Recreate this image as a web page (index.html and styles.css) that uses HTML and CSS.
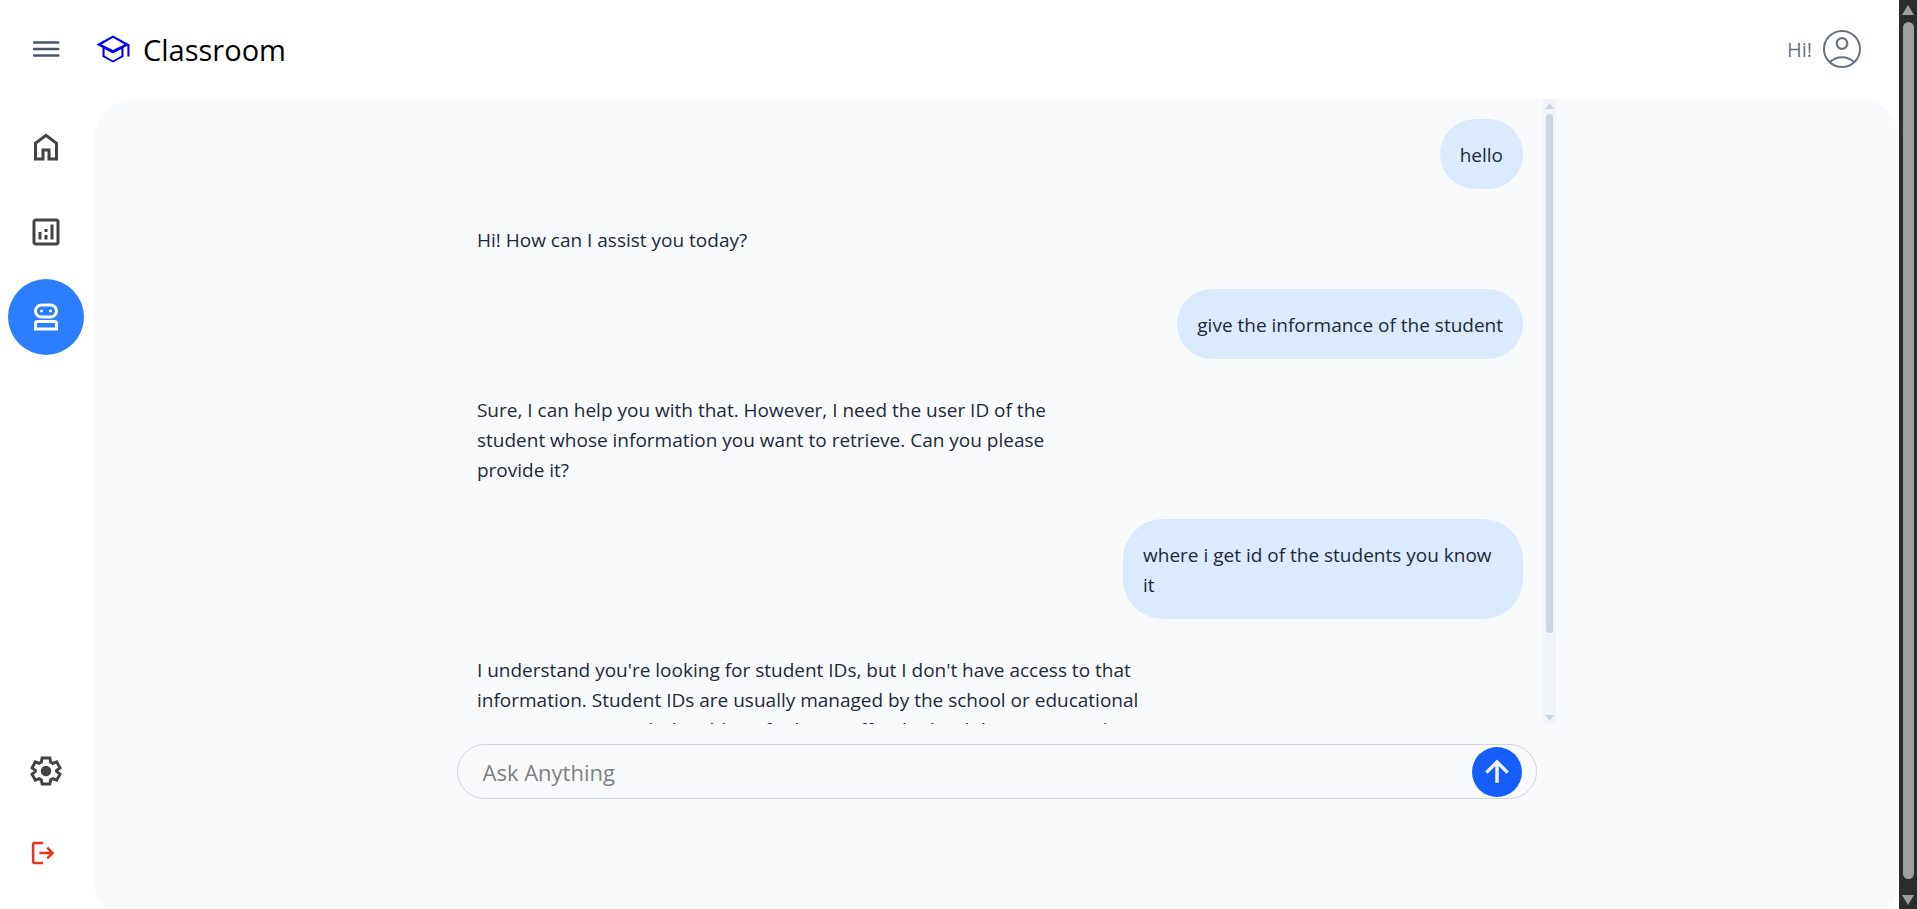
FILE: index.html
```html
<!DOCTYPE html>
<html lang="en">
<head>
<meta charset="utf-8">
<title>Classroom</title>
<link rel="stylesheet" href="styles.css">
</head>
<body>
<div class="page">
  <div class="app">
    <header class="header">
      <button class="menu" aria-label="Menu"><svg width="28" height="18" viewBox="0 0 28 18" fill="none" stroke="#4a5568" stroke-width="2.6" stroke-linecap="round"><path d="M2.200 2.500h24M2.200 9h24M2.200 15.500h24"/></svg></button>
      <a class="brand" href="#"><svg width="36" height="36" viewBox="0 0 24 24" fill="#0000f5"><path d="M12 21l-7-3.800v-6L1 9l11-6 11 6v8h-1.400v-7.200l-2.600 1.400v6L12 21zm0-8.300L19.600 9 12 4.500 4.400 9 12 12.700zm0 6.900l5.600-3.100V12L12 15l-5.600-3v4.500l5.600 3.100z"/></svg><span>Classroom</span></a>
      <button class="user"><span>Hi!</span><svg width="40" height="40" viewBox="0 0 40 40" fill="none" stroke="#6a7282" stroke-width="2"><circle cx="20" cy="20" r="18"/><circle cx="20" cy="14.500" r="5.300" stroke-width="2.200"/><path d="M8 33c6.500-6.500 17.500-6.500 24 0"/></svg></button>
    </header>
    <div class="body">
      <nav class="sidebar">
        <a class="item" href="#" aria-label="Home"><svg width="36" height="36" viewBox="0 0 24 24" fill="#434343"><path d="M6 19h3v-6h6v6h3v-9l-6-4.500L6 10v9zm-2 2V9l8-6 8 6v12h-7v-6h-2v6H4z"/></svg></a>
        <a class="item" href="#" aria-label="Analytics"><svg width="36" height="36" viewBox="0 0 24 24" fill="#434343"><path d="M7 17h2v-5H7v5zm8 0h2V7h-2v10zm-4 0h2v-3h-2v3zm0-5h2v-2h-2v2zM5 21q-.825 0-1.412-.588T3 19V5q0-.825.588-1.412T5 3h14q.825 0 1.413.588T21 5v14q0 .825-.587 1.413T19 21H5zm0-2h14V5H5v14z"/></svg></a>
        <a class="item active" href="#" aria-label="Assistant"><svg width="36" height="36" viewBox="0 0 24 24" fill="#fff"><path d="M4 21v-5q0-.825.588-1.412T6 14h12q.825 0 1.413.588T20 16v5H4zm5-8q-2.075 0-3.537-1.463T4 8q0-2.075 1.463-3.537T9 3h6q2.075 0 3.538 1.463T20 8q0 2.075-1.462 3.537T15 13H9zm-3 6h12v-3H6v3zm3-8h6q1.250 0 2.125-.875T18 8q0-1.250-.875-2.125T15 5H9q-1.250 0-2.125.875T6 8q0 1.250.875 2.125T9 11zm0-2q.425 0 .713-.288T10 8q0-.425-.287-.712T9 7q-.425 0-.712.288T8 8q0 .425.288.712T9 9zm6 0q.425 0 .713-.288T16 8q0-.425-.287-.712T15 7q-.425 0-.712.288T14 8q0 .425.288.712T15 9z"/></svg></a>
        <div class="bottom">
          <a class="item" href="#" aria-label="Settings"><svg width="36" height="36" viewBox="-12 -12 24 24"><path d="M-2.600-8.700h5.200l.5 2.800 1.400.8 2.600-1 2.200 4-2.200 1.700v.8l2.200 1.700-2.200 4-2.600-1-1.400.8-.5 2.800h-5.200l-.5-2.800-1.400-.8-2.600 1-2.200-4 2.200-1.700v-.8l-2.200-1.700 2.200-4 2.600 1 1.400-.8z" fill="none" stroke="#434343" stroke-width="2"/><circle r="3.500" fill="#434343"/></svg></a>
          <a class="item" href="#" aria-label="Log out"><svg width="32" height="30" viewBox="1.500 0 25.600 24" fill="#ea3323"><path d="M5 21q-.825 0-1.412-.587T3 19V5q0-.825.588-1.412T5 3h7v2H5v14h7v2H5zm11-4-1.375-1.450 2.550-2.550H9v-2h8.175l-2.550-2.550L16 7l5 5-5 5z"/></svg></a>
        </div>
      </nav>
      <main class="main">
        <section class="chat">
          <div class="messages">
            <p class="msg mine">hello</p>
            <p class="msg">Hi! How can I assist you today?</p>
            <p class="msg mine">give the informance of the student</p>
            <p class="msg">Sure, I can help you with that. However, I need the user ID of the<br>student whose information you want to retrieve. Can you please<br>provide it?</p>
            <p class="msg mine wide">where i get id of the students you know<br>it</p>
            <p class="msg">I understand you're looking for student IDs, but I don't have access to that<br>information. Student IDs are usually managed by the school or educational<br>institution. You might be able to find it on official school documents or by</p>
          </div>
          <div class="rail"><i class="up"></i><i class="thumb"></i><i class="down"></i></div>
        </section>
        <form class="ask">
          <input type="text" placeholder="Ask Anything" aria-label="Ask Anything">
          <button type="button" class="send" aria-label="Send"><svg width="30" height="30" viewBox="0 0 24 24" fill="none" stroke="#f3f3f3" stroke-width="2.800"><path d="M12 20.500V4.500M3.500 12.500L12 4l8.500 8.500"/></svg></button>
        </form>
      </main>
    </div>
  </div>
  <div class="rail page-rail"><i class="up"></i><i class="thumb"></i><i class="down"></i></div>
</div>
</body>
</html>
```
FILE: styles.css
```css
* { box-sizing: border-box; }
body { margin: 0; background: #fff; color: #1e2939; font-family: "Segoe UI", "Open Sans", "Noto Sans", sans-serif; overflow: hidden; }
button { border: 0; padding: 0; background: none; font: inherit; color: inherit; }
a { color: inherit; text-decoration: none; }
svg { display: block; flex: none; }
.page { display: flex; height: 100vh; overflow: hidden; }
.app { flex: 1; min-width: 0; }
.header { display: flex; align-items: center; height: 99px; padding: 0 37px 2px 32px; }
.menu { margin-right: 35px; }
.brand { display: flex; align-items: center; gap: 12px; color: #000; font-size: 29px; }
.brand span { padding-top: 2px; }
.user { display: flex; align-items: center; gap: 10px; margin-left: auto; color: #6a7282; font-size: 20px; font-weight: 500; }
.user span { padding-top: 2px; }
.body { display: flex; height: calc(100vh - 88px); }
.sidebar { display: flex; flex-direction: column; gap: 9px; width: 94px; padding: 10px 10px 0 8px; height: calc(100vh - 99px); }
.item { display: flex; align-items: center; justify-content: center; width: 76px; height: 76px; border-radius: 50%; }
.active { background: #2b7fff; }
.bottom { display: grid; gap: 6px; margin-top: auto; padding-bottom: 18px; }
.main { flex: 1; min-width: 0; display: flex; flex-direction: column; align-items: center; background: #f9fafc; border-radius: 40px; }
.chat { display: flex; width: 62%; height: calc(100vh - 284px); overflow: hidden; }
.messages { flex: 1; display: flex; flex-direction: column; align-items: flex-start; gap: 15px; padding: 20px; }
.msg { flex: none; margin: 0; padding: 21px 20px 19px; font-size: 19px; line-height: 30px; white-space: nowrap; }
.mine { align-self: flex-end; background: #dbeafe; border-radius: 40px; }
.wide { width: 400px; }
.ask { display: flex; align-items: center; width: 60%; max-width: 1080px; height: 55px; margin-top: 20px; padding: 0 14px 0 25px; border: 1px solid #d1d5dc; border-radius: 28px; }
.ask input { flex: 1; min-width: 0; border: 0; padding: 0; outline: 0; background: none; font: inherit; font-size: 22px; }
.ask input::placeholder { color: #808080; opacity: 1; }
.send { display: flex; align-items: center; justify-content: center; width: 50px; height: 50px; border-radius: 50%; background: #155dfc; }
.rail { display: flex; flex-direction: column; align-items: center; flex: none; width: 13px; padding: 4px 0 3px; background: #f1f5f9; color: #cbd5e1; }
.rail i { display: block; }
.up, .down { width: 9px; height: 6px; background: currentColor; }
.up { clip-path: polygon(50% 0, 100% 100%, 0 100%); }
.down { clip-path: polygon(0 0, 100% 0, 50% 100%); margin-top: auto; }
.thumb { width: 7px; height: 84%; margin-top: 5px; border-radius: 4px; background: currentColor; }
.page-rail { width: 18px; padding: 5px 0 4px; background: #2c2c2c; color: #9f9f9f; }
.page-rail .up, .page-rail .down { width: 12px; height: 10px; }
.page-rail .thumb { width: 11px; flex: 1; margin: 7px 0 16px; border-radius: 6px; }
```
